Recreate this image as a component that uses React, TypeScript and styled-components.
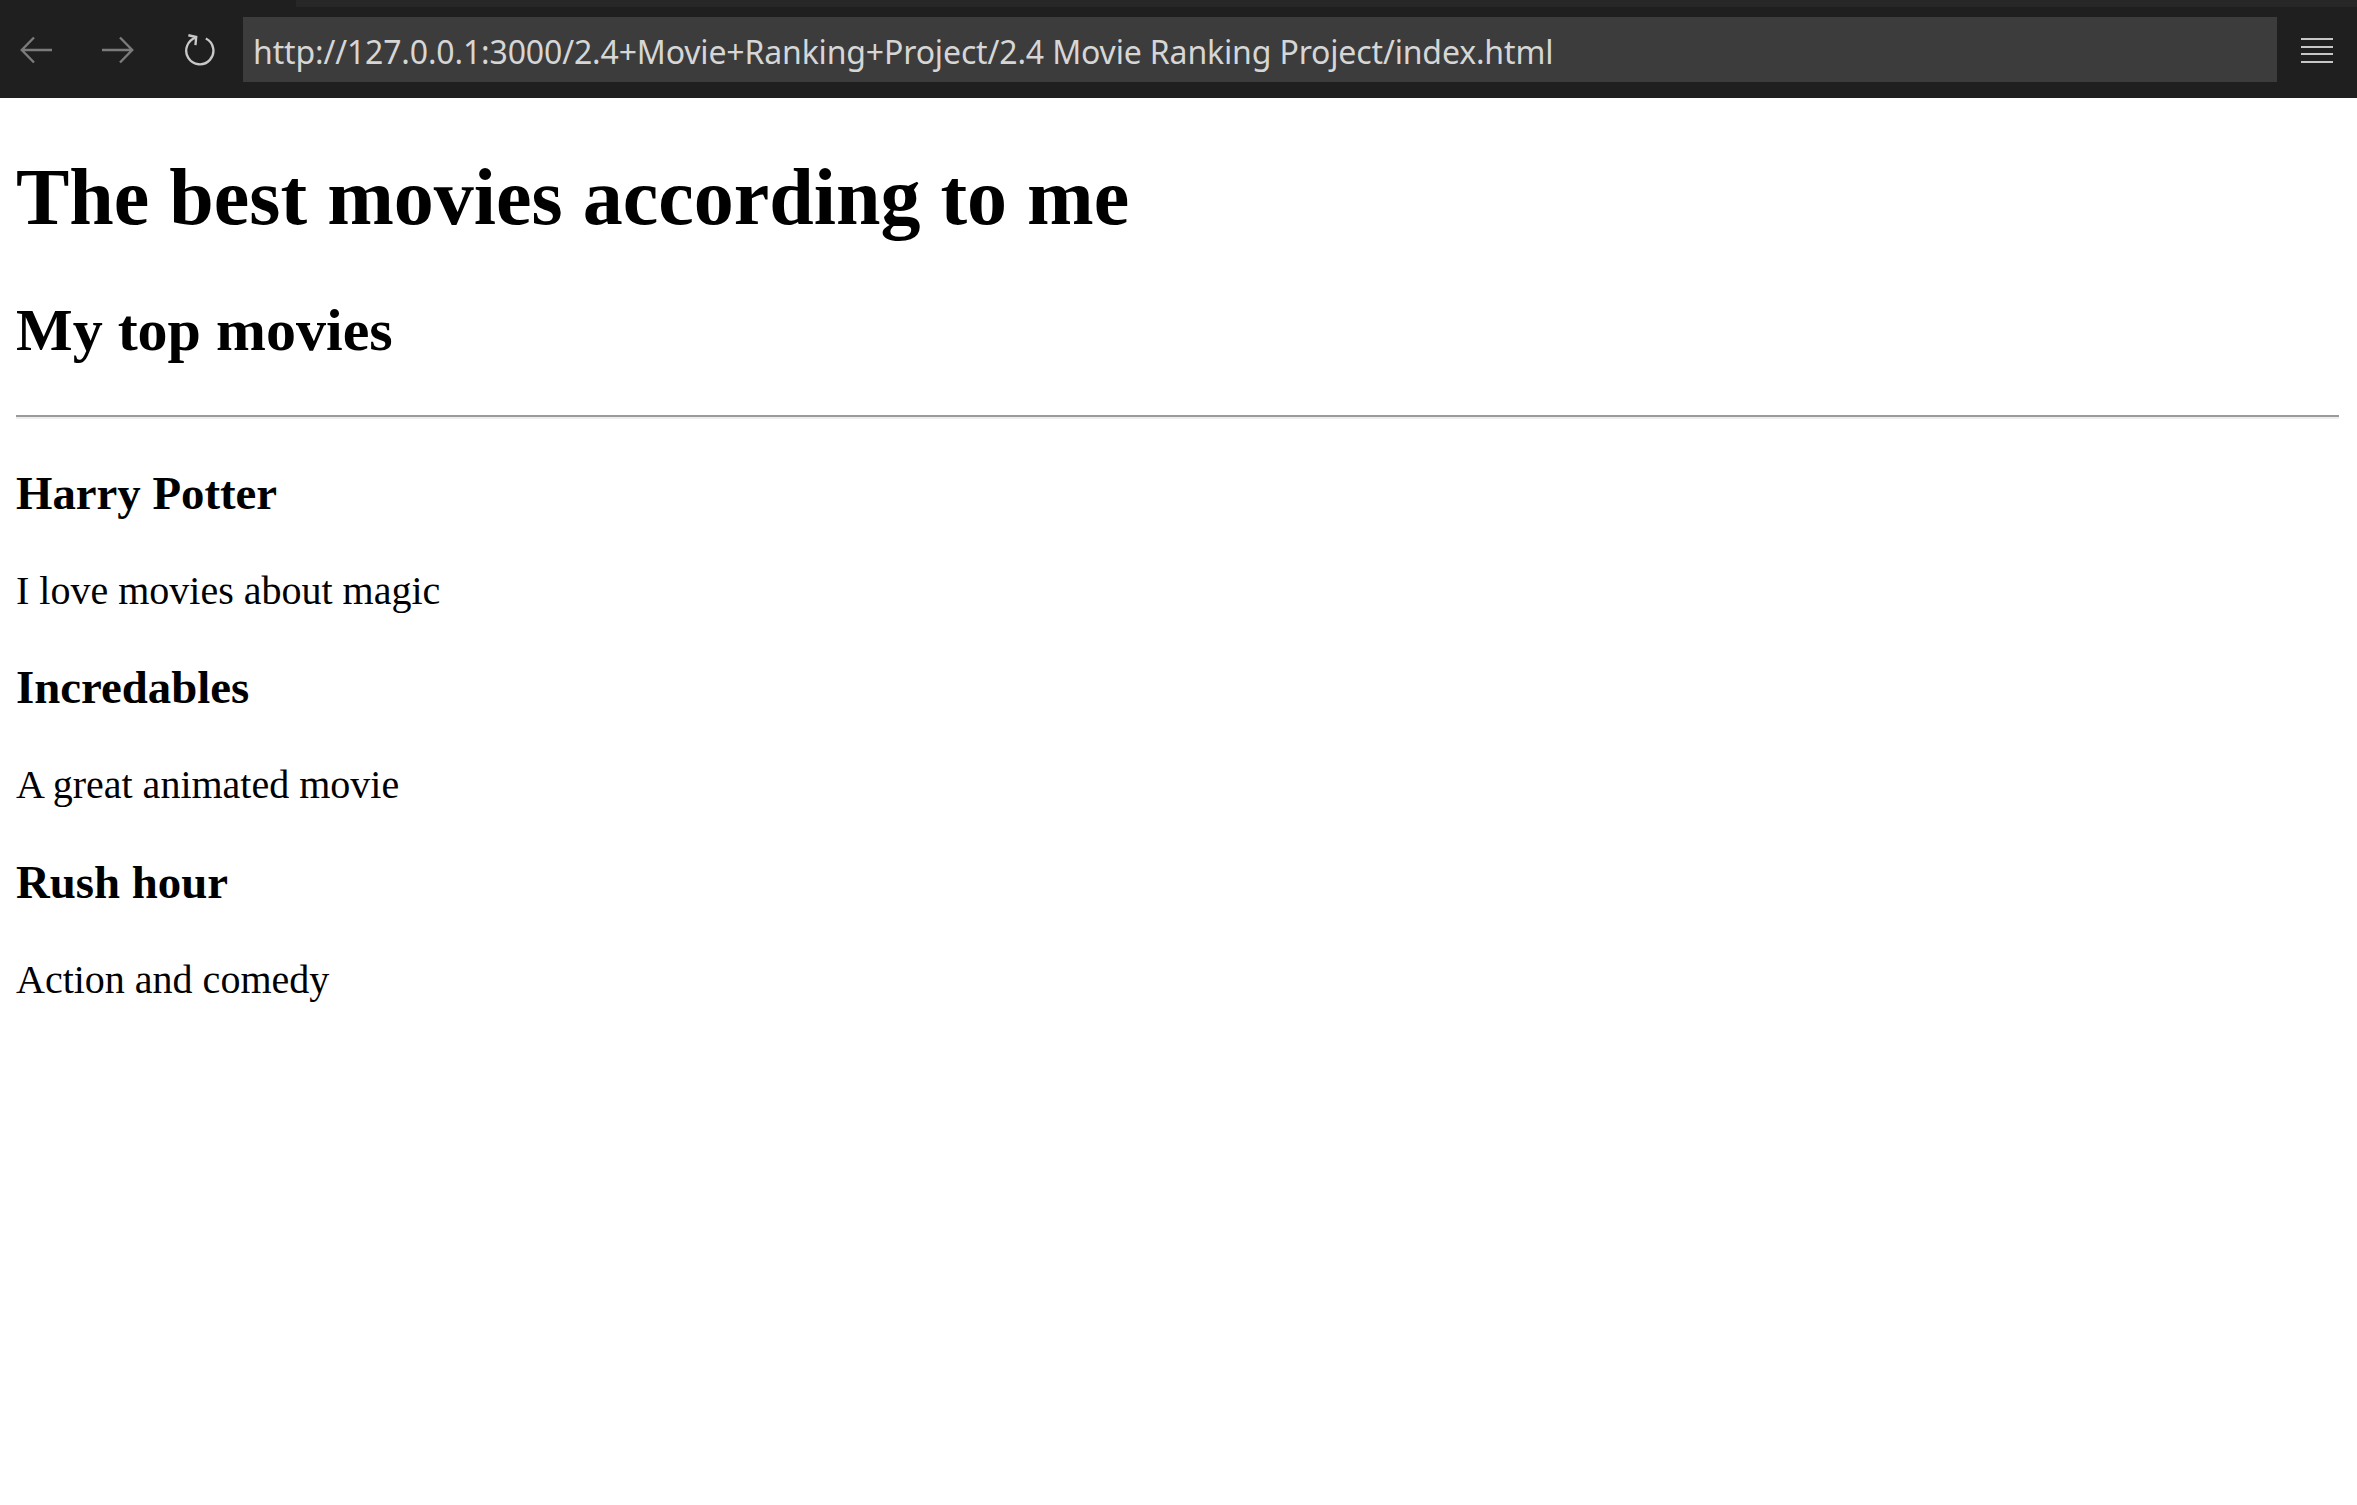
import React from "react";
import styled, { createGlobalStyle } from "styled-components";

const GlobalStyle = createGlobalStyle`
  html, body {
    margin: 0;
    padding: 0;
    background: #ffffff;
  }
  body {
    font-family: "Liberation Serif", "Times New Roman", serif;
    color: #000000;
  }
`;

const Toolbar = styled.header`
  display: flex;
  flex-direction: column;
  height: 98px;
  background: #1f1f1f;
`;

const TopStrip = styled.div`
  display: flex;
  height: 7px;
`;

const StripSegment = styled.div<{ $tone: string; $grow?: boolean }>`
  background: ${(p) => p.$tone};
  flex: ${(p) => (p.$grow ? "1" : "0 0 296px")};
`;

const NavRow = styled.div`
  display: flex;
  align-items: center;
  padding: 10px 24px 16px 20px;
`;

const NavButtons = styled.div`
  display: flex;
  align-items: center;
  gap: 50px;
  margin-right: 26px;
`;

const IconButton = styled.div<{ $width?: number }>`
  display: flex;
  align-items: center;
  justify-content: center;
  width: ${(p) => p.$width ?? 32}px;
  height: 34px;
`;

const AddressBar = styled.div`
  flex: 1;
  height: 65px;
  display: flex;
  align-items: center;
  background: #3c3c3c;
  padding: 4px 0 0 10px;
  box-sizing: border-box;
  margin-right: 24px;
  overflow: hidden;
`;

const AddressText = styled.span`
  font-family: "Noto Sans", "Open Sans", sans-serif;
  font-size: 32px;
  letter-spacing: -0.15px;
  color: #d6d6d6;
  white-space: nowrap;
`;

const MenuButton = styled.div`
  display: flex;
  flex-direction: column;
  gap: 5.5px;
  width: 32px;
  padding-top: 2px;
`;

const MenuLine = styled.span`
  display: block;
  height: 2px;
  background: #c6c6c6;
`;

const Main = styled.main`
  padding: 0 18px 0 16px;
  font-size: 40px;
`;

const Title = styled.h1`
  font-size: 80px;
  font-weight: bold;
  margin: 53.6px 0;
`;

const Subtitle = styled.h2`
  font-size: 60px;
  font-weight: bold;
  margin: 49.8px 0;
`;

const Divider = styled.hr`
  margin: 20px 0;
  border: none;
  border-top: 2px solid #9a9a9a;
  border-bottom: 2px solid #eeeeee;
  height: 0;
`;

const MovieTitle = styled.h3`
  font-size: 46.8px;
  font-weight: bold;
  margin: 46.8px 0;
`;

const MovieNote = styled.p`
  font-size: 40px;
  margin: 40px 0;
`;

const BackIcon = () => (
  <svg width="32" height="28" viewBox="0 0 32 28" fill="none">
    <path d="M14 1.5 L1.8 14 L14 26.5 M1.8 14 H32" stroke="#7b7b7b" strokeWidth="2.4" />
  </svg>
);

const ForwardIcon = () => (
  <svg width="32" height="28" viewBox="0 0 32 28" fill="none">
    <path d="M18 1.5 L30.2 14 L18 26.5 M30.2 14 H0" stroke="#7b7b7b" strokeWidth="2.4" />
  </svg>
);

const ReloadIcon = () => (
  <svg width="34" height="34" viewBox="0 0 34 34" fill="none">
    <path
      d="M22.5 5.2 A14 14 0 1 1 12.4 4.3"
      stroke="#c8c8c8"
      strokeWidth="2.4"
    />
    <path d="M4.5 1.8 L12.6 3.6 L11.8 12" stroke="#c8c8c8" strokeWidth="2.4" />
  </svg>
);

const movies = [
  { title: "Harry Potter", note: "I love movies about magic" },
  { title: "Incredables", note: "A great animated movie" },
  { title: "Rush hour", note: "Action and comedy" },
];

export default function App() {
  return (
    <>
      <GlobalStyle />
      <Toolbar>
        <TopStrip>
          <StripSegment $tone="#1f1f1f" />
          <StripSegment $tone="#272727" $grow />
        </TopStrip>
        <NavRow>
          <NavButtons>
            <IconButton>
              <BackIcon />
            </IconButton>
            <IconButton>
              <ForwardIcon />
            </IconButton>
            <IconButton $width={33}>
              <ReloadIcon />
            </IconButton>
          </NavButtons>
          <AddressBar>
            <AddressText>
              http://127.0.0.1:3000/2.4+Movie+Ranking+Project/2.4 Movie Ranking Project/index.html
            </AddressText>
          </AddressBar>
          <MenuButton>
            <MenuLine />
            <MenuLine />
            <MenuLine />
            <MenuLine />
          </MenuButton>
        </NavRow>
      </Toolbar>
      <Main>
        <Title>The best movies according to me</Title>
        <Subtitle>My top movies</Subtitle>
        <Divider />
        {movies.map((m) => (
          <React.Fragment key={m.title}>
            <MovieTitle>{m.title}</MovieTitle>
            <MovieNote>{m.note}</MovieNote>
          </React.Fragment>
        ))}
      </Main>
    </>
  );
}
